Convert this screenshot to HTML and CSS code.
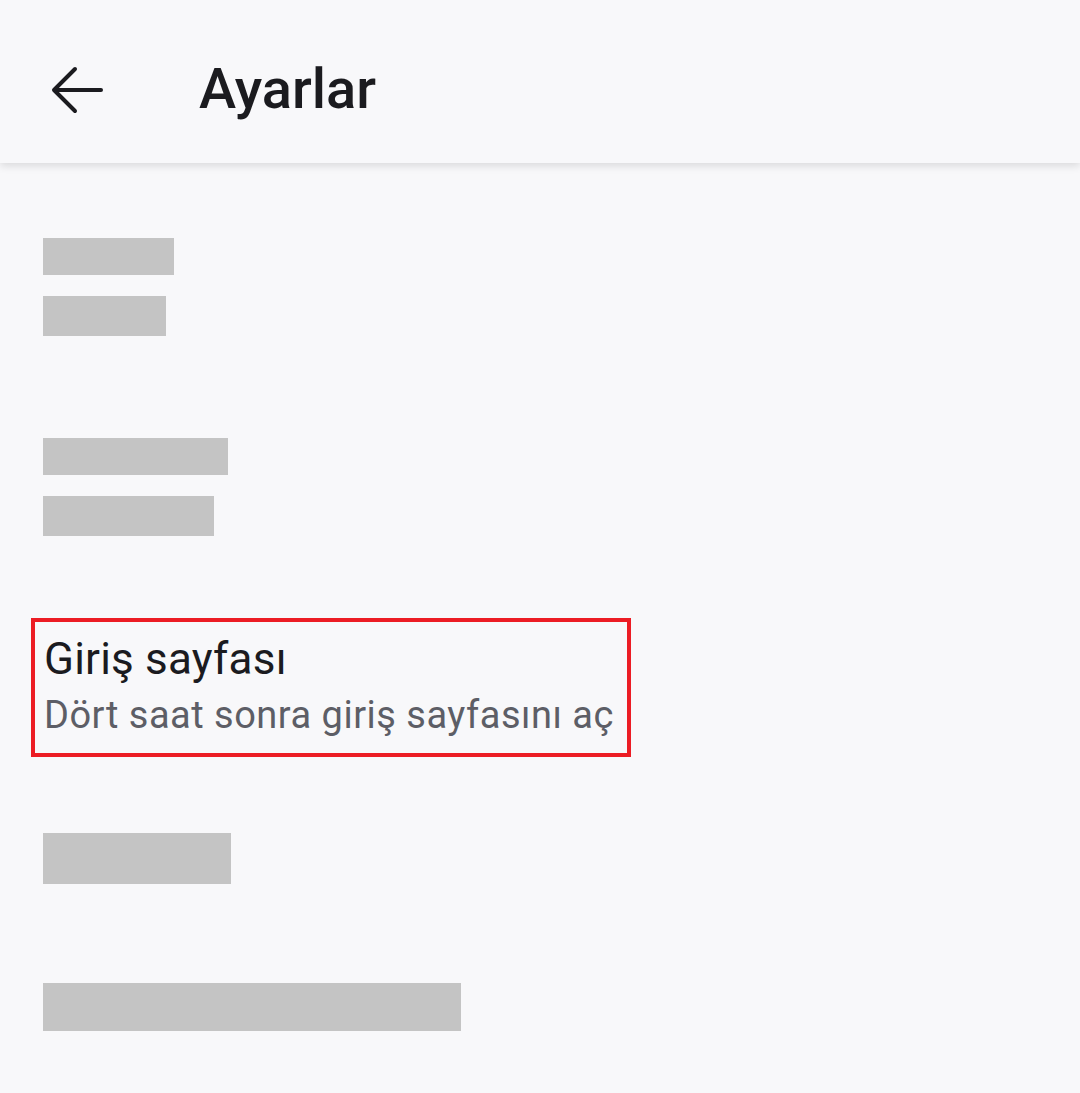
FILE: index.html
```html
<!DOCTYPE html>
<html lang="tr">
<head>
  <meta charset="UTF-8" />
  <meta name="viewport" content="width=device-width, initial-scale=1.0" />
  <title>Ayarlar</title>
  <link rel="stylesheet" href="styles.css">
</head>
<body>
  <div class="appbar">
    <button class="back" aria-label="Geri">
      <svg width="60" height="60" viewBox="0 0 60 60" fill="none" stroke="#1b1b1f" stroke-width="4" stroke-linecap="round" stroke-linejoin="round">
        <path d="M9 30H55" />
        <path d="M29 9L8 30L29 51" />
      </svg>
    </button>
    <h1 class="title">Ayarlar</h1>
  </div>

  <div class="prefs">
    <div class="pref two">
      <div class="bar w131"></div>
      <div class="bar w123 tall"></div>
    </div>
    <div class="pref two">
      <div class="bar w185"></div>
      <div class="bar w171 tall"></div>
    </div>
    <div class="pref two">
      <div class="marked">
        <div class="pref-title">Giriş sayfası</div>
        <div class="pref-summary">Dört saat sonra giriş sayfasını aç</div>
      </div>
    </div>
    <div class="pref one">
      <div class="bar w188 h51"></div>
    </div>
    <div class="pref one">
      <div class="bar w418 h48"></div>
    </div>
  </div>
</body>
</html>
```

FILE: styles.css
```css
body {
  margin: 0;
  background: #f8f8fa;
  font-family: Roboto, "Noto Sans", sans-serif;
  color: #1b1b1f;
}
.appbar {
  height: 163px;
  box-sizing: border-box;
  padding-top: 16px;
  display: flex;
  align-items: center;
  background: #f8f8fa;
  box-shadow: 0 3px 8px rgba(0, 0, 0, 0.12);
  position: relative;
}
.back {
  border: 0;
  background: none;
  padding: 0;
  margin-left: 46px;
  width: 60px;
  height: 60px;
  display: flex;
}
.title {
  margin: 0 0 0 93px;
  font-size: 56px;
  font-weight: 500;
  line-height: 1;
  padding-bottom: 2px;
}
.prefs {
  padding-top: 24px;
}
.pref {
  display: flex;
  flex-direction: column;
  padding-left: 43px;
  box-sizing: border-box;
}
.pref.two {
  height: 200px;
  justify-content: center;
}
.pref.one {
  height: 150px;
  padding-top: 46px;
}
.bar {
  background: #c4c4c4;
  height: 37px;
}
.bar.tall {
  height: 40px;
  margin-top: 21px;
}
.bar.h51 { height: 51px; }
.bar.h48 { height: 48px; }
.w131 { width: 131px; }
.w123 { width: 123px; }
.w185 { width: 185px; }
.w171 { width: 171px; }
.w188 { width: 188px; }
.w418 { width: 418px; }

.marked {
  align-self: flex-start;
  margin-left: -12px;
  border: 4px solid #ec1c24;
  padding: 10px 13px 9px 9px;
}
.pref-title {
  font-size: 44px;
  line-height: 54px;
  letter-spacing: 0.2px;
}
.pref-summary {
  font-size: 38px;
  line-height: 58px;
  letter-spacing: 0.5px;
  color: #5d5e66;
}
```
